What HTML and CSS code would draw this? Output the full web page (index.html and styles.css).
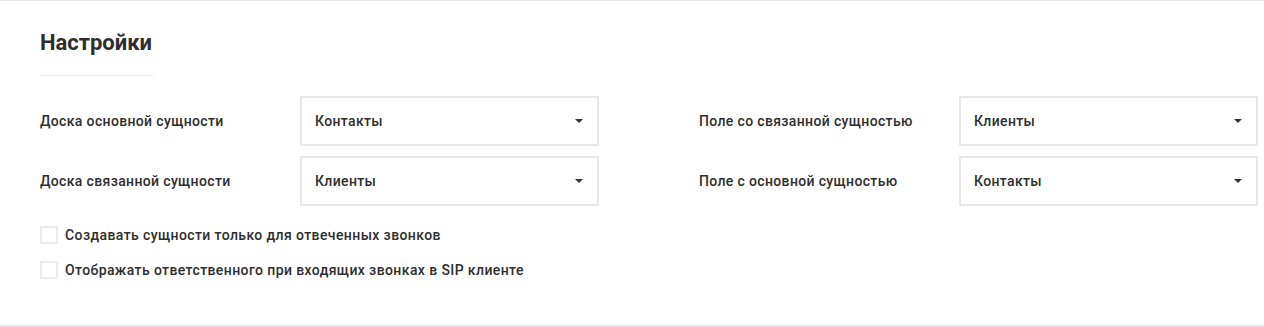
FILE: index.html
```html
<!DOCTYPE html>
<html lang="ru">
<head>
    <meta charset="UTF-8">
    <meta name="viewport" content="width=device-width, initial-scale=1.0">
    <title>Настройки</title>
    <link rel="stylesheet" href="styles.css">
</head>
<body>
    <div class="settings-card">
        <h1 class="settings-title">Настройки</h1>
        <div class="title-line"></div>

        <div class="fields">
            <div class="field">
                <span class="field-label">Доска основной сущности</span>
                <div class="select-box">
                    <span>Контакты</span>
                    <span class="caret"></span>
                </div>
            </div>
            <div class="field">
                <span class="field-label">Поле со связанной сущностью</span>
                <div class="select-box">
                    <span>Клиенты</span>
                    <span class="caret"></span>
                </div>
            </div>
            <div class="field">
                <span class="field-label">Доска связанной сущности</span>
                <div class="select-box">
                    <span>Клиенты</span>
                    <span class="caret"></span>
                </div>
            </div>
            <div class="field">
                <span class="field-label">Поле с основной сущностью</span>
                <div class="select-box">
                    <span>Контакты</span>
                    <span class="caret"></span>
                </div>
            </div>
        </div>

        <div class="checks">
            <label class="check-row">
                <span class="check-box"></span>
                Создавать сущности только для отвеченных звонков
            </label>
            <label class="check-row">
                <span class="check-box"></span>
                Отображать ответственного при входящих звонках в SIP клиенте
            </label>
        </div>
    </div>
</body>
</html>
```

FILE: styles.css
```css
:root {
    --text: #2e2e2e;
    --line: #e8e8e8;
}

body {
    margin: 0;
    font-family: Roboto, 'Noto Sans', sans-serif;
    color: var(--text);
    background: #fff;
}

.settings-card {
    height: 327px;
    box-sizing: border-box;
    border-top: 1px solid #e6e8ec;
    border-bottom: 2px solid #e4e4e6;
    padding: 0 6px 0 40px;
}

.settings-title {
    margin: 0;
    padding-top: 29px;
    font-size: 22px;
    font-weight: 700;
    line-height: 26px;
}

.title-line {
    width: 113px;
    height: 1px;
    margin-top: 19px;
    background: #ebebeb;
}

.fields {
    display: grid;
    grid-template-columns: 1fr 1fr;
    column-gap: 100px;
    row-gap: 10px;
    margin-top: 20px;
}

.field {
    display: flex;
    align-items: center;
}

.field-label {
    width: 260px;
    flex-shrink: 0;
    font-size: 14px;
    font-weight: 500;
    letter-spacing: 0.35px;
}

.select-box {
    flex: 1;
    height: 50px;
    box-sizing: border-box;
    border: 2px solid var(--line);
    display: flex;
    align-items: center;
    justify-content: space-between;
    padding: 0 14px 0 13px;
    font-size: 14px;
    font-weight: 500;
    letter-spacing: 0.35px;
}

.caret {
    width: 0;
    height: 0;
    border-left: 4px solid transparent;
    border-right: 4px solid transparent;
    border-top: 4px solid #333;
}

.checks {
    margin-top: 20px;
    display: flex;
    flex-direction: column;
    gap: 17px;
}

.check-row {
    display: flex;
    align-items: center;
    gap: 7px;
    font-size: 14px;
    font-weight: 500;
    letter-spacing: 0.4px;
}

.check-box {
    width: 18px;
    height: 18px;
    box-sizing: border-box;
    border: 2px solid #ececec;
}
```
